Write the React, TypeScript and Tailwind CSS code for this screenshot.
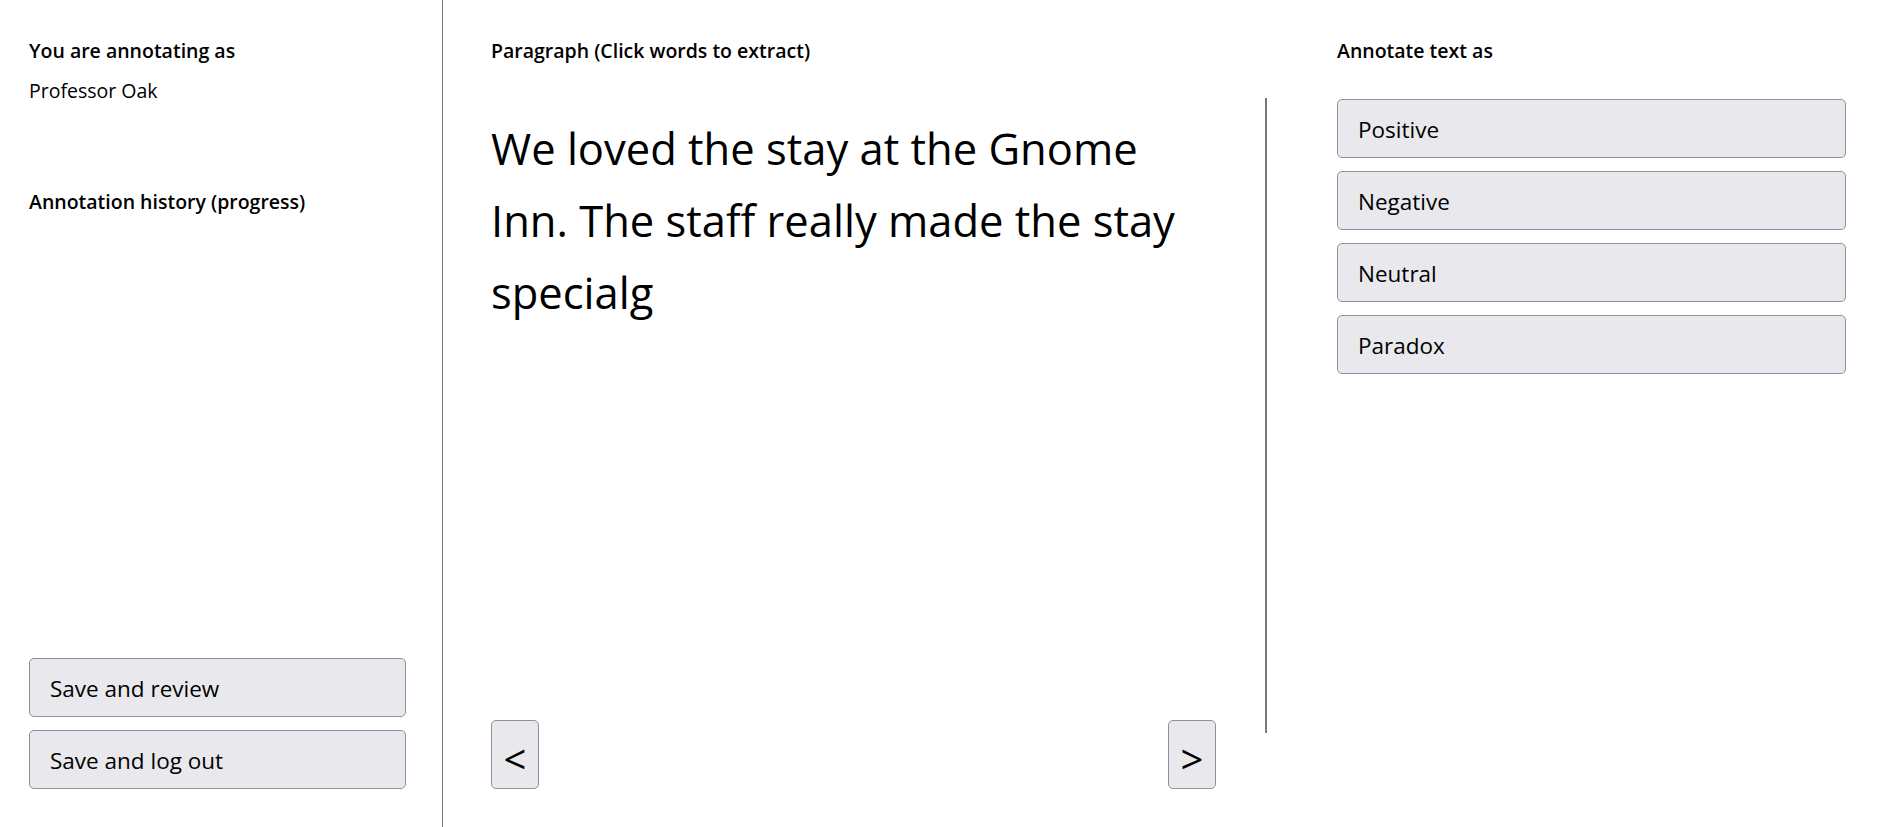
const labels = ["Positive", "Negative", "Neutral", "Paradox"];

function GreyButton({ children, className = "" }: { children: React.ReactNode; className?: string }) {
  return (
    <button
      type="button"
      className={`rounded-[5px] border border-[#8f8f9d] bg-[#e9e9ed] text-left text-black ${className}`}
    >
      {children}
    </button>
  );
}

export default function App() {
  return (
    <div
      className="flex h-[827px] w-full overflow-hidden bg-white text-black"
      style={{ fontFamily: '"Open Sans", "Noto Sans", sans-serif' }}
    >
      {/* sidebar */}
      <aside className="flex w-[443px] shrink-0 flex-col justify-between border-r border-[#7a7a7a] pb-[38px] pl-[29px] pr-[36px] pt-[37px]">
        <div>
          <h2 className="text-[19.5px] font-semibold leading-[28px]">You are annotating as</h2>
          <p className="mt-[12px] text-[19.5px] leading-[28px]">Professor Oak</p>
          <h2 className="mt-[83px] text-[19.5px] font-semibold leading-[28px]">Annotation history (progress)</h2>
        </div>
        <div className="flex flex-col gap-[13px]">
          <GreyButton className="h-[59px] pl-[20px] pt-[3px] text-[22.5px]">Save and review</GreyButton>
          <GreyButton className="h-[59px] pl-[20px] pt-[3px] text-[22.5px]">Save and log out</GreyButton>
        </div>
      </aside>

      {/* paragraph */}
      <section className="ml-[48px] flex w-[725px] shrink-0 flex-col pb-[38px] pt-[37px]">
        <h2 className="text-[19.5px] font-semibold leading-[28px]">Paragraph (Click words to extract)</h2>
        <p className="mt-[48px] text-[43.5px] leading-[72px]">
          We loved the stay at the Gnome Inn. The staff really made the stay specialg
        </p>
        <div className="mt-auto flex justify-between">
          <GreyButton className="flex h-[69px] w-[48px] items-center justify-center pt-[8px] text-[40px]">&lt;</GreyButton>
          <GreyButton className="flex h-[69px] w-[48px] items-center justify-center pt-[8px] text-[40px]">&gt;</GreyButton>
        </div>
      </section>

      <div className="ml-[49px] mt-[98px] h-[635px] w-[2px] shrink-0 bg-[#7a7a7a]" />

      {/* labels */}
      <section className="ml-[70px] flex w-[509px] shrink-0 flex-col pt-[37px]">
        <h2 className="text-[19.5px] font-semibold leading-[28px]">Annotate text as</h2>
        <div className="mt-[34px] flex flex-col gap-[13px]">
          {labels.map((l) => (
            <GreyButton key={l} className="h-[59px] pl-[20px] pt-[3px] text-[22.5px]">
              {l}
            </GreyButton>
          ))}
        </div>
      </section>
    </div>
  );
}
